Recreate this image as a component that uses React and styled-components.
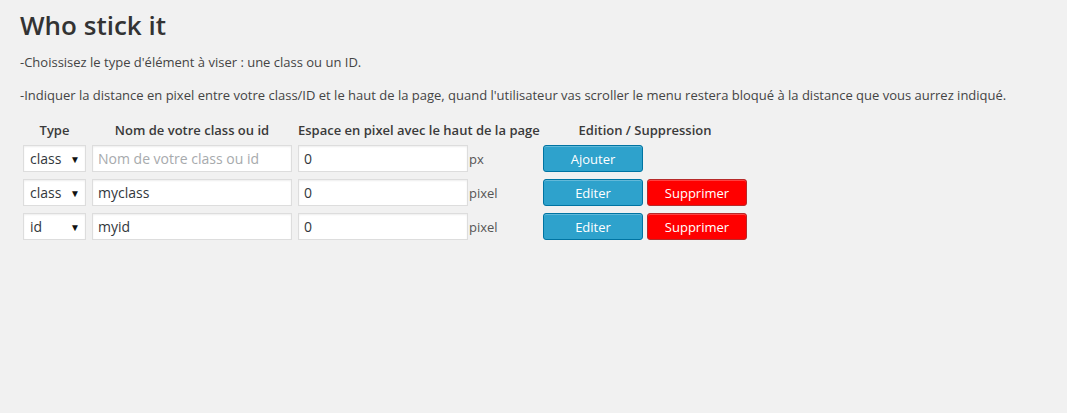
import React from 'react'
import styled, { createGlobalStyle } from 'styled-components'

const GlobalStyle = createGlobalStyle`
    html, body {
        margin: 0;
        padding: 0;
        background: #f1f1f1;
    }
    body {
        font-family: "Open Sans", "Liberation Sans", sans-serif;
        font-size: 13px;
        color: #444;
    }
`;

const Page = styled.div`
    padding: 8px 20px 0 20px;
`;

const Title = styled.h2`
    margin: 0;
    font-size: 26px;
    line-height: 34px;
    font-weight: 600;
    color: #333;
`;

const Text = styled.p`
    margin: ${props => props.first ? '10px' : '13px'} 0 0 0;
    line-height: 20px;
    font-size: 13px;
    color: #444;
`;

const Table = styled.div`
    display: grid;
    grid-template-columns: 63px 200px 239px 204px;
    column-gap: 6px;
    row-gap: 7px;
    margin: 15px 0 0 3px;
    align-items: center;
`;

const HeadCell = styled.div`
    font-weight: 600;
    color: #3a3a3a;
    text-align: center;
    line-height: 20px;
    white-space: nowrap;
    margin-bottom: -2px;
`;

const SelectWrap = styled.div`
    position: relative;
    height: 27px;
`;

const Select = styled.select`
    appearance: none;
    -webkit-appearance: none;
    width: 100%;
    height: 27px;
    box-sizing: border-box;
    border: 1px solid #ddd;
    border-radius: 0;
    background: #fff;
    padding: 0 0 0 6px;
    font-family: inherit;
    font-size: 14px;
    color: #32373c;
    box-shadow: inset 0 1px 2px rgba(0,0,0,.07);
    outline: none;
`;

const Arrow = styled.span`
    position: absolute;
    right: 6px;
    top: 7px;
    font-size: 10px;
    color: #111;
    pointer-events: none;
`;

const Input = styled.input`
    width: 100%;
    height: 27px;
    box-sizing: border-box;
    border: 1px solid #ddd;
    background: #fff;
    padding: 0 5px;
    font-family: inherit;
    font-size: 14px;
    color: #32373c;
    box-shadow: inset 0 1px 2px rgba(0,0,0,.07);
    outline: none;
    &::placeholder {
        color: #a7aaad;
    }
`;

const SpaceCell = styled.div`
    display: flex;
    align-items: center;
    gap: 1px;
    ${Input} {
        width: 170px;
        flex: none;
    }
`;

const Unit = styled.span`
    font-size: 13px;
    color: #555;
`;

const Actions = styled.div`
    display: flex;
    gap: 4px;
`;

const Button = styled.button`
    width: 100px;
    height: 27px;
    box-sizing: border-box;
    border-radius: 3px;
    font-family: inherit;
    font-size: 13px;
    color: #fff;
    cursor: pointer;
    padding: 0;
    background: ${props => props.danger ? '#ff0000' : '#2ea2cc'};
    border: 1px solid ${props => props.danger ? '#b62a2a' : '#0074a2'};
    box-shadow: inset 0 1px 0 rgba(255,255,255,.25);
`;

const rows = [
    { type: 'class', name: 'myclass', space: '0' },
    { type: 'id', name: 'myid', space: '0' },
];

const TypeSelect = ({ value }) => (
    <SelectWrap>
        <Select defaultValue={value}>
            <option value="class">class</option>
            <option value="id">id</option>
        </Select>
        <Arrow>▼</Arrow>
    </SelectWrap>
);

const App = () => {
    return (
        <Page>
            <GlobalStyle />
            <Title>Who stick it</Title>
            <Text first>-Choissisez le type d'élément à viser : une class ou un ID.</Text>
            <Text>-Indiquer la distance en pixel entre votre class/ID et le haut de la page, quand l'utilisateur vas scroller le menu restera bloqué à la distance que vous aurrez indiqué.</Text>
            <Table>
                <HeadCell>Type</HeadCell>
                <HeadCell>Nom de votre class ou id</HeadCell>
                <HeadCell>Espace en pixel avec le haut de la page</HeadCell>
                <HeadCell>Edition / Suppression</HeadCell>

                <TypeSelect value="class" />
                <Input placeholder="Nom de votre class ou id" />
                <SpaceCell>
                    <Input defaultValue="0" />
                    <Unit>px</Unit>
                </SpaceCell>
                <Actions>
                    <Button>Ajouter</Button>
                </Actions>

                {rows.map(row => (
                    <React.Fragment key={row.name}>
                        <TypeSelect value={row.type} />
                        <Input defaultValue={row.name} />
                        <SpaceCell>
                            <Input defaultValue={row.space} />
                            <Unit>pixel</Unit>
                        </SpaceCell>
                        <Actions>
                            <Button>Editer</Button>
                            <Button danger>Supprimer</Button>
                        </Actions>
                    </React.Fragment>
                ))}
            </Table>
        </Page>
    )
}

export default App
